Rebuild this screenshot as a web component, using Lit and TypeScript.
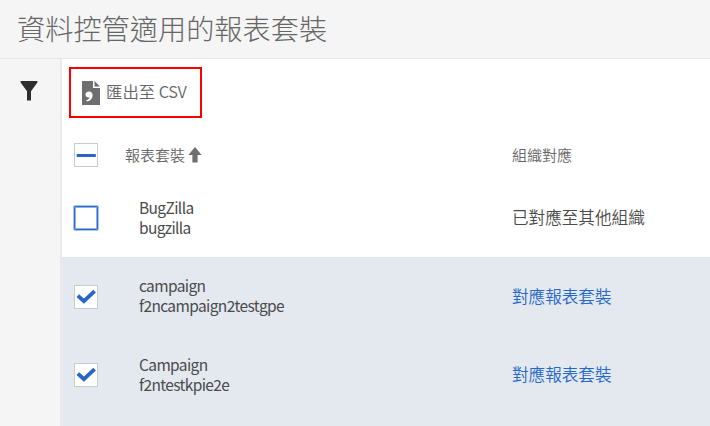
import { LitElement, html, css, svg } from "lit";
import { customElement, property } from "lit/decorators.js";

type CheckState = "mixed" | "empty" | "checked";

interface Suite {
  name: string;
  id: string;
  state: CheckState;
  mapping: string;
  link: boolean;
}

const suites: Suite[] = [
  { name: "BugZilla", id: "bugzilla", state: "empty", mapping: "已對應至其他組織", link: false },
  { name: "campaign", id: "f2ncampaign2testgpe", state: "checked", mapping: "對應報表套裝", link: true },
  { name: "Campaign", id: "f2ntestkpie2e", state: "checked", mapping: "對應報表套裝", link: true },
];

@customElement("check-box")
export class CheckBox extends LitElement {
  @property() state: CheckState = "empty";

  static styles = css`
    :host { display: block; width: 24px; height: 24px; }
    .box {
      box-sizing: border-box;
      width: 24px;
      height: 24px;
      border: 1px solid #cacaca;
      background: #fff;
    }
    .empty {
      border-color: #2b6acb;
      border-radius: 1px;
      box-shadow: 0 0 0 1px #a9c6ee, inset 0 0 0 1px #8fb2e6;
    }
    svg { display: block; }
    .mark { fill: none; stroke: #2765c8; stroke-width: 3; }
    .tick { stroke-width: 3.8; }
  `;

  render() {
    const mark =
      this.state === "mixed"
        ? svg`<path class="mark" d="M1.7 11.5H20.8" />`
        : this.state === "checked"
          ? svg`<path class="mark tick" d="M2.8 9.6L8.9 15.2L19.6 5.2" />`
          : null;
    return html`<div class="box ${this.state}"><svg width="22" height="22" viewBox="0 0 22 22">${mark}</svg></div>`;
  }
}

@customElement("app-root")
export class AppRoot extends LitElement {
  static styles = css`
    :host {
      display: flex;
      flex-direction: column;
      height: 426px;
      overflow: hidden;
      background: #fff;
      color: #4b4b4b;
      font-family: "Noto Sans CJK TC", "Noto Sans", sans-serif;
      font-weight: 350;
    }
    .title {
      box-sizing: border-box;
      flex: none;
      height: 59px;
      margin: 0;
      padding-left: 17px;
      border-bottom: 1px solid #e7e7e7;
      background: #f5f5f5;
      color: #666;
      font-size: 28.2px;
      font-weight: 300;
      line-height: 55px;
    }
    .body { display: flex; flex: 1; min-height: 0; }
    .rail {
      box-sizing: border-box;
      flex: none;
      width: 62px;
      padding: 22px 0 0 20px;
      border-right: 2px solid #e9e9e9;
      background: #f5f5f5;
    }
    .rail svg { display: block; fill: #2e2e2e; }
    .main { display: flex; flex: 1; flex-direction: column; min-width: 0; }
    .export {
      box-sizing: border-box;
      display: flex;
      align-items: center;
      width: 133px;
      height: 51px;
      margin: 8px 0 0 7px;
      padding: 0 0 1px 11px;
      gap: 6px;
      border: 2px solid #f00;
      color: #666;
      font-size: 16.4px;
      line-height: 22px;
      white-space: nowrap;
    }
    .export svg { flex: none; margin-top: 1px; }
    .export .text { padding-bottom: 2px; }
    .export .latin { letter-spacing: -0.5px; }
    .row {
      display: grid;
      grid-template-columns: 65px 373px 1fr;
      align-items: center;
      flex: none;
      height: 78.5px;
      padding-left: 12px;
      box-sizing: border-box;
    }
    .item check-box { margin-top: 1.5px; }
    .head { height: 60px; padding-top: 13px; color: #666; font-size: 15px; }
    .sort { display: flex; align-items: center; gap: 3px; margin-left: -14px; }
    .sort svg { display: block; fill: #6e6e6e; }
    .selected { background: #e4e9f0; }
    .suite {
      padding-top: 0.6px;
      font-size: 15.5px;
      font-weight: 400;
      line-height: 19.6px;
      letter-spacing: -0.62px;
    }
    .map { font-size: 16.6px; }
    .link { color: #2668c9; }
    .rest { flex: 1; }
  `;

  render() {
    return html`
      <h1 class="title">資料控管適用的報表套裝</h1>
      <div class="body">
        <div class="rail">
          <svg width="18" height="20" viewBox="0 0 18 20"><path d="M.6 0H17.4V1.6L11 10.2V19.6H7V10.2L.6 1.6Z" /></svg>
        </div>
        <div class="main">
          <div class="export">
            <svg width="18" height="24" viewBox="0 0 18 24">
              <path fill="#6e6e6e" d="M0 0H11V7H18V24H0ZM12.5 0L18 5.6H12.5Z" />
              <path fill="#fff" d="M6.8 10.4C9 10.2 10.6 11.8 10.6 14.2C10.6 17.2 8.6 19.8 4.8 20.4L4.3 19.2C6.3 18.6 7.3 17.6 7.5 16.3C5.2 16.9 3.5 15.4 3.5 13.4C3.5 11.7 5 10.5 6.8 10.4Z" />
            </svg>
            <span class="text">匯出至 <span class="latin">CSV</span></span>
          </div>
          <div class="row head">
            <check-box state="mixed"></check-box>
            <div class="sort">
              報表套裝
              <svg width="14" height="16" viewBox="0 0 14 16"><path d="M7 0L13.6 8H9.6V15.5H4.4V8H.4Z" /></svg>
            </div>
            <span>組織對應</span>
          </div>
          ${suites.map(
            (s) => html`
              <div class="row item ${s.state === "checked" ? "selected" : ""}">
                <check-box state=${s.state}></check-box>
                <div class="suite"><div>${s.name}</div><div>${s.id}</div></div>
                <span class="map ${s.link ? "link" : ""}">${s.mapping}</span>
              </div>
            `,
          )}
          <div class="rest selected"></div>
        </div>
      </div>
    `;
  }
}
